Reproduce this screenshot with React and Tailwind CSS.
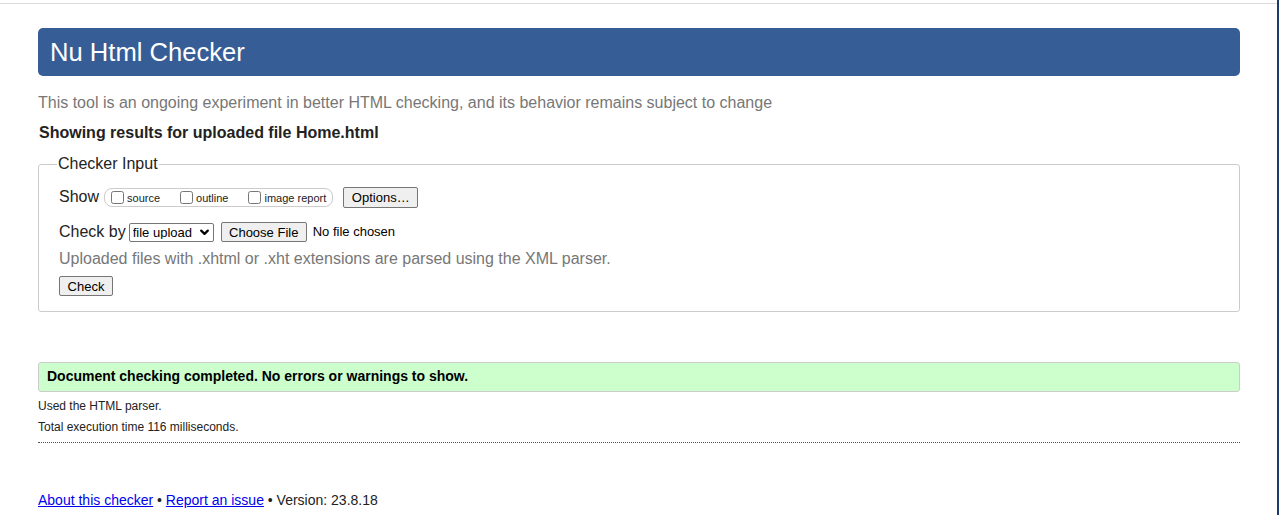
import React from 'react';

const Checkbox = ({ label }) => (
  <label className="flex items-center gap-[3px]">
    <input type="checkbox" className="m-0 w-[13px] h-[13px]" />
    <span className="text-[11px] text-[#222] leading-none mt-[3px]">{label}</span>
  </label>
);

const Btn = ({ children, className = '' }) => (
  <button
    type="button"
    className={`border border-[#767676] bg-[#efefef] rounded-[2px] text-[13px] text-black leading-none px-[6px] ${className}`}
  >
    {children}
  </button>
);

const App = () => {
  return (
    <div className="flex min-h-[515px] bg-white" style={{ fontFamily: '"Liberation Sans", Arial, sans-serif' }}>
      <div className="flex-1 pt-[3px]">
        <div className="border-t border-[#dcdcdc]" />
        <div className="pl-[38px] pr-[37px] pt-[24px]">
          <header className="bg-[#365d95] rounded-[5px] h-[48px] flex items-center px-[12px]">
            <h1 className="text-[25.6px] text-white font-normal">Nu Html Checker</h1>
          </header>

          <p className="mt-[17px] text-[16px] text-[#777] leading-[20px]">
            This tool is an ongoing experiment in better HTML checking, and its behavior remains subject to change
          </p>
          <p className="mt-[10px] text-[16px] font-bold text-[#222] leading-[20px] pl-[1px]">
            Showing results for uploaded file Home.html
          </p>

          <fieldset className="mt-[9px] border border-[#ccc] rounded-[3px] pl-[20px] pr-[20px] pb-[13px] pt-[6px]">
            <legend className="text-[16px] text-[#222] px-[1px] ml-[-2px]">Checker Input</legend>

            <div className="flex items-center h-[24px] mt-[3px]">
              <span className="text-[16px] text-[#222] mr-[5px]">Show</span>
              <div className="flex items-center border border-[#ccc] rounded-[8px] h-[19px] pl-[6px] pr-[6px]">
                <Checkbox label="source" />
                <div className="w-[20px]" />
                <Checkbox label="outline" />
                <div className="w-[20px]" />
                <Checkbox label="image report" />
              </div>
              <Btn className="ml-[10px] h-[21px] w-[75px]">Options…</Btn>
            </div>

            <div className="flex items-center h-[24px] mt-[11px]">
              <span className="text-[16px] text-[#222] mr-[3px]">Check by</span>
              <div className="relative h-[19px] w-[85px] border border-[#767676] rounded-[2px] flex items-center">
                <select className="appearance-none w-full h-full text-[13px] text-black pl-[3px] leading-none outline-none">
                  <option>file upload</option>
                </select>
                <svg className="absolute right-[4px] top-[5px] pointer-events-none" width="9" height="7" viewBox="0 0 9 7">
                  <path d="M1.2 1.6 L4.5 4.9 L7.8 1.6" fill="none" stroke="#000" strokeWidth="2.2" strokeLinecap="round" strokeLinejoin="round" />
                </svg>
              </div>
              <Btn className="ml-[7px] h-[20px] w-[86px]">Choose File</Btn>
              <span className="ml-[6px] text-[13px] text-black">No file chosen</span>
            </div>

            <p className="mt-[5px] text-[16px] text-[#777] leading-[20px]">
              Uploaded files with .xhtml or .xht extensions are parsed using the XML parser.
            </p>

            <Btn className="mt-[7px] h-[20px] w-[54px]">Check</Btn>
          </fieldset>

          <div className="mt-[50px] bg-[#ccffcc] border border-[#ccc] rounded-[3px] h-[30px] flex items-center px-[8px]">
            <span className="text-[14px] font-bold text-black">Document checking completed. No errors or warnings to show.</span>
          </div>

          <p className="mt-[7px] text-[12px] text-[#222] leading-[14px]">Used the HTML parser.</p>
          <p className="mt-[7px] text-[12px] text-[#222] leading-[14px]">Total execution time 116 milliseconds.</p>
          <div className="mt-[8px] border-t border-dotted border-[#555]" />

          <p className="mt-[47px] text-[14px] text-[#222]">
            <a href="#" className="text-[#0000ee] underline">About this checker</a>
            {' • '}
            <a href="#" className="text-[#0000ee] underline">Report an issue</a>
            {' • Version: 23.8.18'}
          </p>
        </div>
      </div>
      <div className="w-[2px] bg-[#1d3c6e]" />
    </div>
  );
};

export default App;
